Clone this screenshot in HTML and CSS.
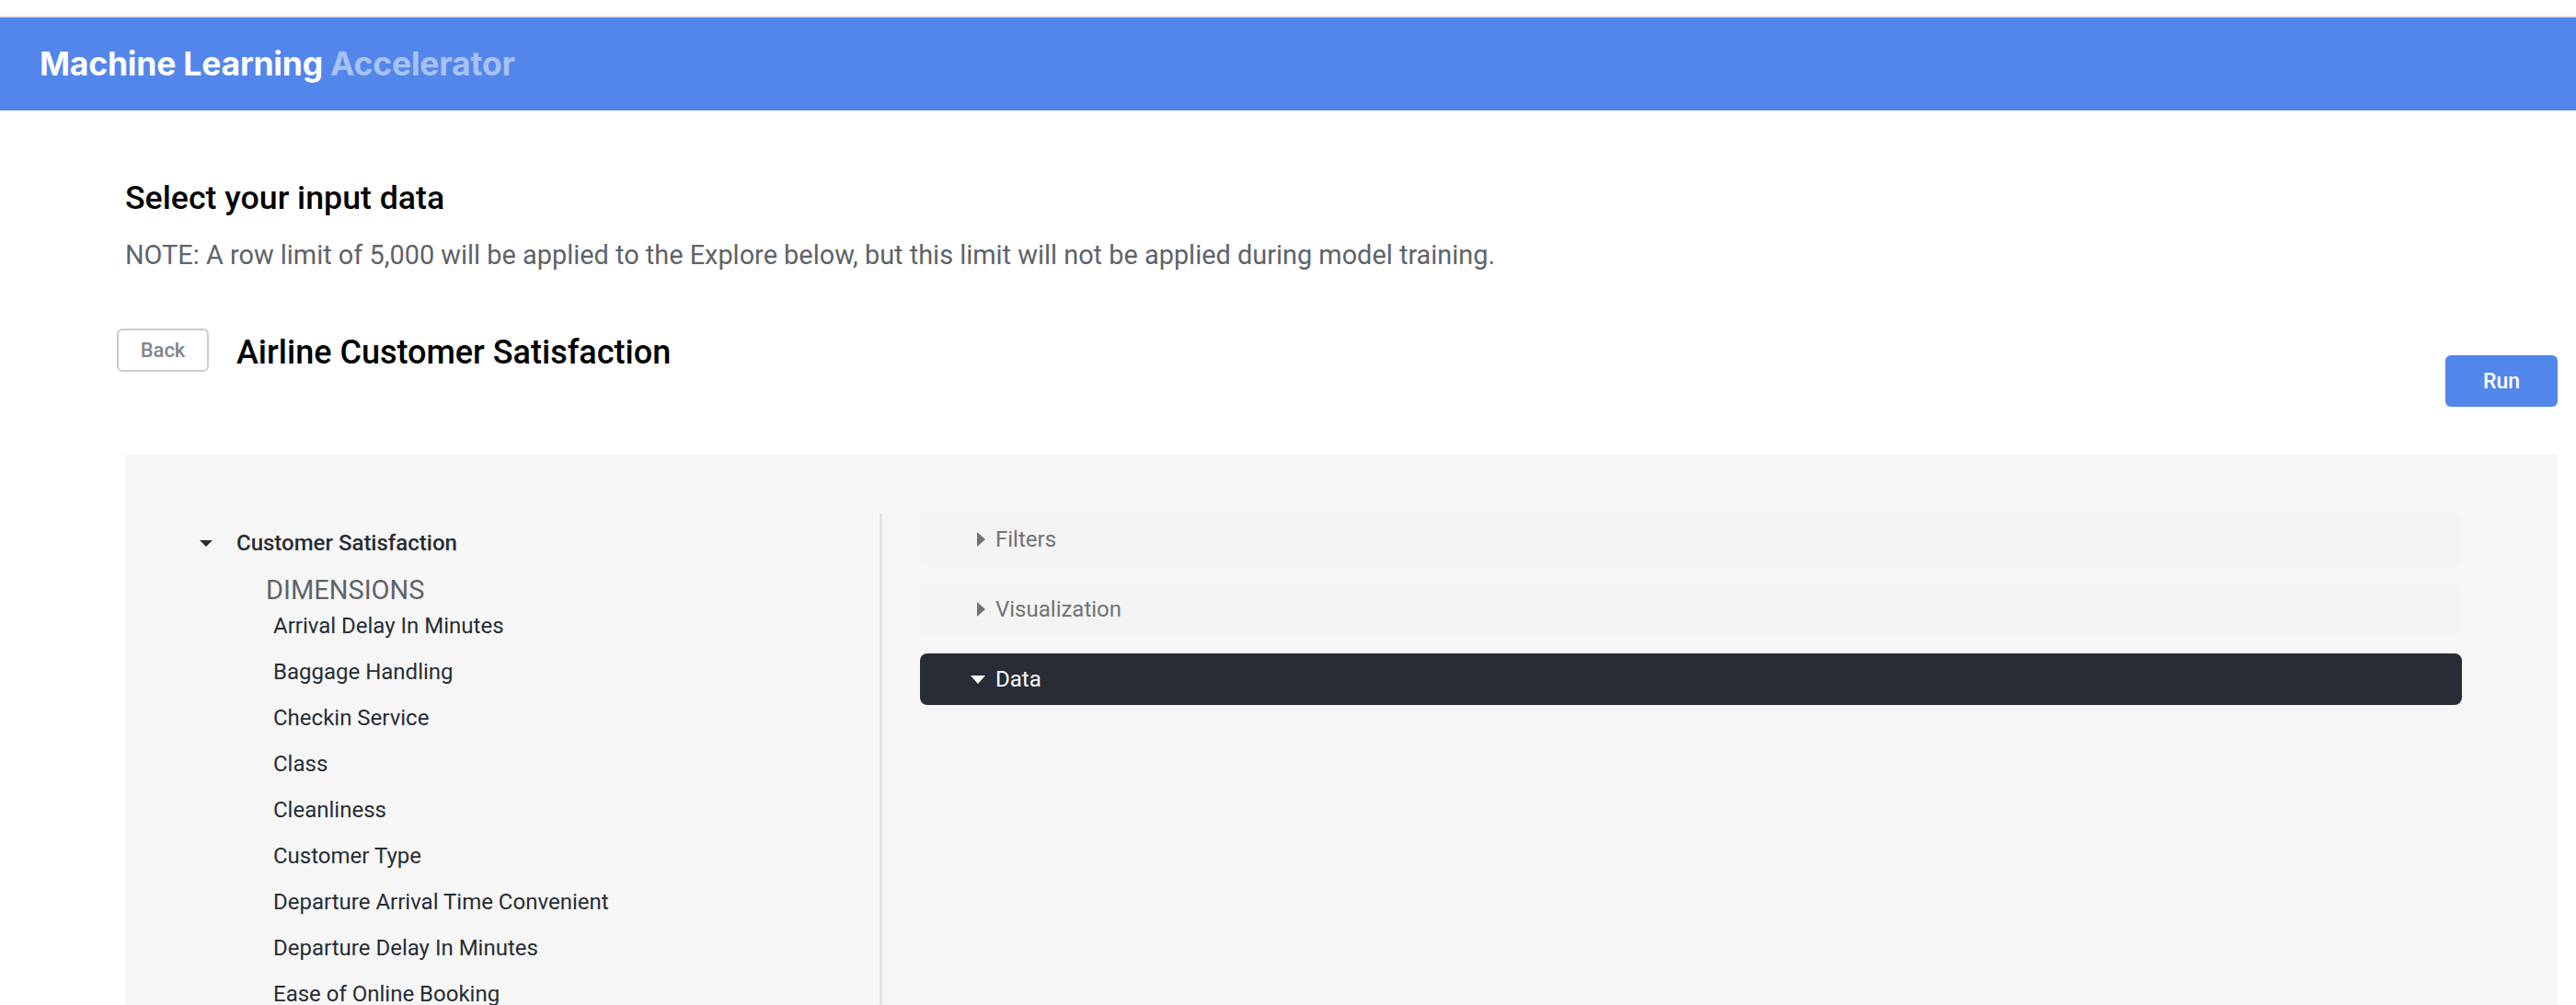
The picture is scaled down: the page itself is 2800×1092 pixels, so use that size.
FILE: index.html
```html
<!DOCTYPE html>
<html lang="en">
<head>
<meta charset="utf-8">
<title>Machine Learning Accelerator</title>
<link rel="stylesheet" href="styles.css">
</head>
<body>
<div class="app">
  <div class="topbar">
    <header class="appbar">
      <span class="brand">Machine Learning <span class="brand-light">Accelerator</span></span>
    </header>
  </div>
  <main class="content">
    <h1 class="page-title">Select your input data</h1>
    <p class="note">NOTE: A row limit of 5,000 will be applied to the Explore below, but this limit will not be applied during model training.</p>
    <div class="toolbar">
      <div class="toolbar-left">
        <button class="btn-back" type="button">Back</button>
        <h2 class="explore-title">Airline Customer Satisfaction</h2>
      </div>
      <button class="btn-run" type="button">Run</button>
    </div>
    <section class="panel">
      <aside class="field-picker">
        <div class="view-head">
          <svg class="caret-down" width="14" height="8" viewBox="0 0 14 8"><path d="M0 0 L14 0 L7 7 Z" fill="#262d33"/></svg>
          <span class="view-name">Customer Satisfaction</span>
        </div>
        <div class="group-label">DIMENSIONS</div>
        <ul class="field-list">
          <li>Arrival Delay In Minutes</li>
          <li>Baggage Handling</li>
          <li>Checkin Service</li>
          <li>Class</li>
          <li>Cleanliness</li>
          <li>Customer Type</li>
          <li>Departure Arrival Time Convenient</li>
          <li>Departure Delay In Minutes</li>
          <li>Ease of Online Booking</li>
        </ul>
      </aside>
      <div class="explore">
        <div class="acc-row">
          <svg class="caret-right" width="9" height="16" viewBox="0 0 9 16"><path d="M0 0 L9 8 L0 16 Z" fill="#6f7277"/></svg>
          <span>Filters</span>
        </div>
        <div class="acc-row">
          <svg class="caret-right" width="9" height="16" viewBox="0 0 9 16"><path d="M0 0 L9 8 L0 16 Z" fill="#6f7277"/></svg>
          <span>Visualization</span>
        </div>
        <div class="acc-row acc-open">
          <svg class="caret-open" width="16" height="9" viewBox="0 0 16 9"><path d="M0 0 L16 0 L8 9 Z" fill="#ffffff"/></svg>
          <span>Data</span>
        </div>
      </div>
    </section>
  </main>
</div>
</body>
</html>
```

FILE: styles.css
```css
* { box-sizing: border-box; }
html, body { margin: 0; padding: 0; }
body {
  background: #ffffff;
  font-family: Roboto, "Liberation Sans", Arial, sans-serif;
  color: #000;
  overflow: hidden;
}
.app {
  height: 100vh;
  display: flex;
  flex-direction: column;
  overflow: hidden;
}
.topbar { padding-top: 17px; }
.appbar {
  height: 103px;
  border-top: 2px solid #e3e3e3;
  background: #5286ea;
  display: flex;
  align-items: center;
  padding-left: 43px;
}
.brand {
  font-family: Inter, "Open Sans", sans-serif;
  font-weight: 700;
  font-size: 35.5px;
  color: #ffffff;
  letter-spacing: -0.2px;
}
.brand-light { color: rgba(255, 255, 255, 0.5); }

.content {
  flex: 1;
  min-height: 0;
  display: flex;
  flex-direction: column;
  padding: 0 20px 0 136px;
}
.page-title {
  margin: 75px 0 0;
  font-size: 35.7px;
  line-height: 40px;
  font-weight: 500;
  color: #000;
}
.note {
  margin: 25px 0 0;
  font-size: 28.9px;
  line-height: 34px;
  color: #5f6368;
}
.toolbar {
  margin-top: 63px;
  display: flex;
  justify-content: space-between;
  align-items: flex-start;
}
.toolbar-left {
  display: flex;
  align-items: center;
  gap: 30px;
  margin-left: -9px;
}
.btn-back {
  width: 100px;
  height: 47px;
  border: 2px solid #c9ccd1;
  border-radius: 6px;
  background: #fff;
  font-family: Roboto, sans-serif;
  font-weight: 500;
  font-size: 22px;
  color: #80868b;
  padding: 0;
}
.explore-title {
  margin: 0;
  padding-top: 4px;
  font-size: 36px;
  line-height: 42px;
  font-weight: 500;
  color: #000;
}
.btn-run {
  margin-top: 29px;
  width: 122px;
  height: 56px;
  border: none;
  border-radius: 6px;
  background: #5286ea;
  color: #fff;
  font-family: Roboto, sans-serif;
  font-weight: 500;
  font-size: 23px;
  padding: 0;
}

.panel {
  flex: 1;
  min-height: 0;
  margin-top: 52px;
  background: #f6f6f6;
  display: flex;
  overflow: hidden;
}
.field-picker {
  width: 820px;
  flex: none;
  padding: 81px 0 0 81px;
}
.view-head {
  display: flex;
  align-items: center;
  gap: 26px;
  height: 30px;
}
.caret-down { display: block; margin-top: 2px; }
.view-name {
  font-size: 24px;
  line-height: 30px;
  font-weight: 500;
  color: #262d33;
}
.group-label {
  margin: 22px 0 0 72px;
  font-size: 29px;
  line-height: 28px;
  color: #5f6368;
}
.field-list {
  list-style: none;
  margin: 0;
  padding: 0 0 0 80px;
}
.field-list li {
  font-size: 24px;
  line-height: 50px;
  color: #262d33;
}
.explore {
  flex: 1;
  margin-top: 64px;
  border-left: 3px solid #e3e3e3;
  padding: 0 104px 0 41px;
  display: flex;
  flex-direction: column;
  gap: 20px;
}
.acc-row {
  height: 56px;
  border-radius: 8px;
  background: #f4f4f4;
  display: flex;
  align-items: center;
  gap: 11px;
  padding-left: 62px;
  font-size: 24px;
  color: #6f7277;
}
.acc-open {
  background: #282c34;
  color: #ffffff;
  padding-left: 55px;
  gap: 11px;
}
.acc-row svg { display: block; }
```
